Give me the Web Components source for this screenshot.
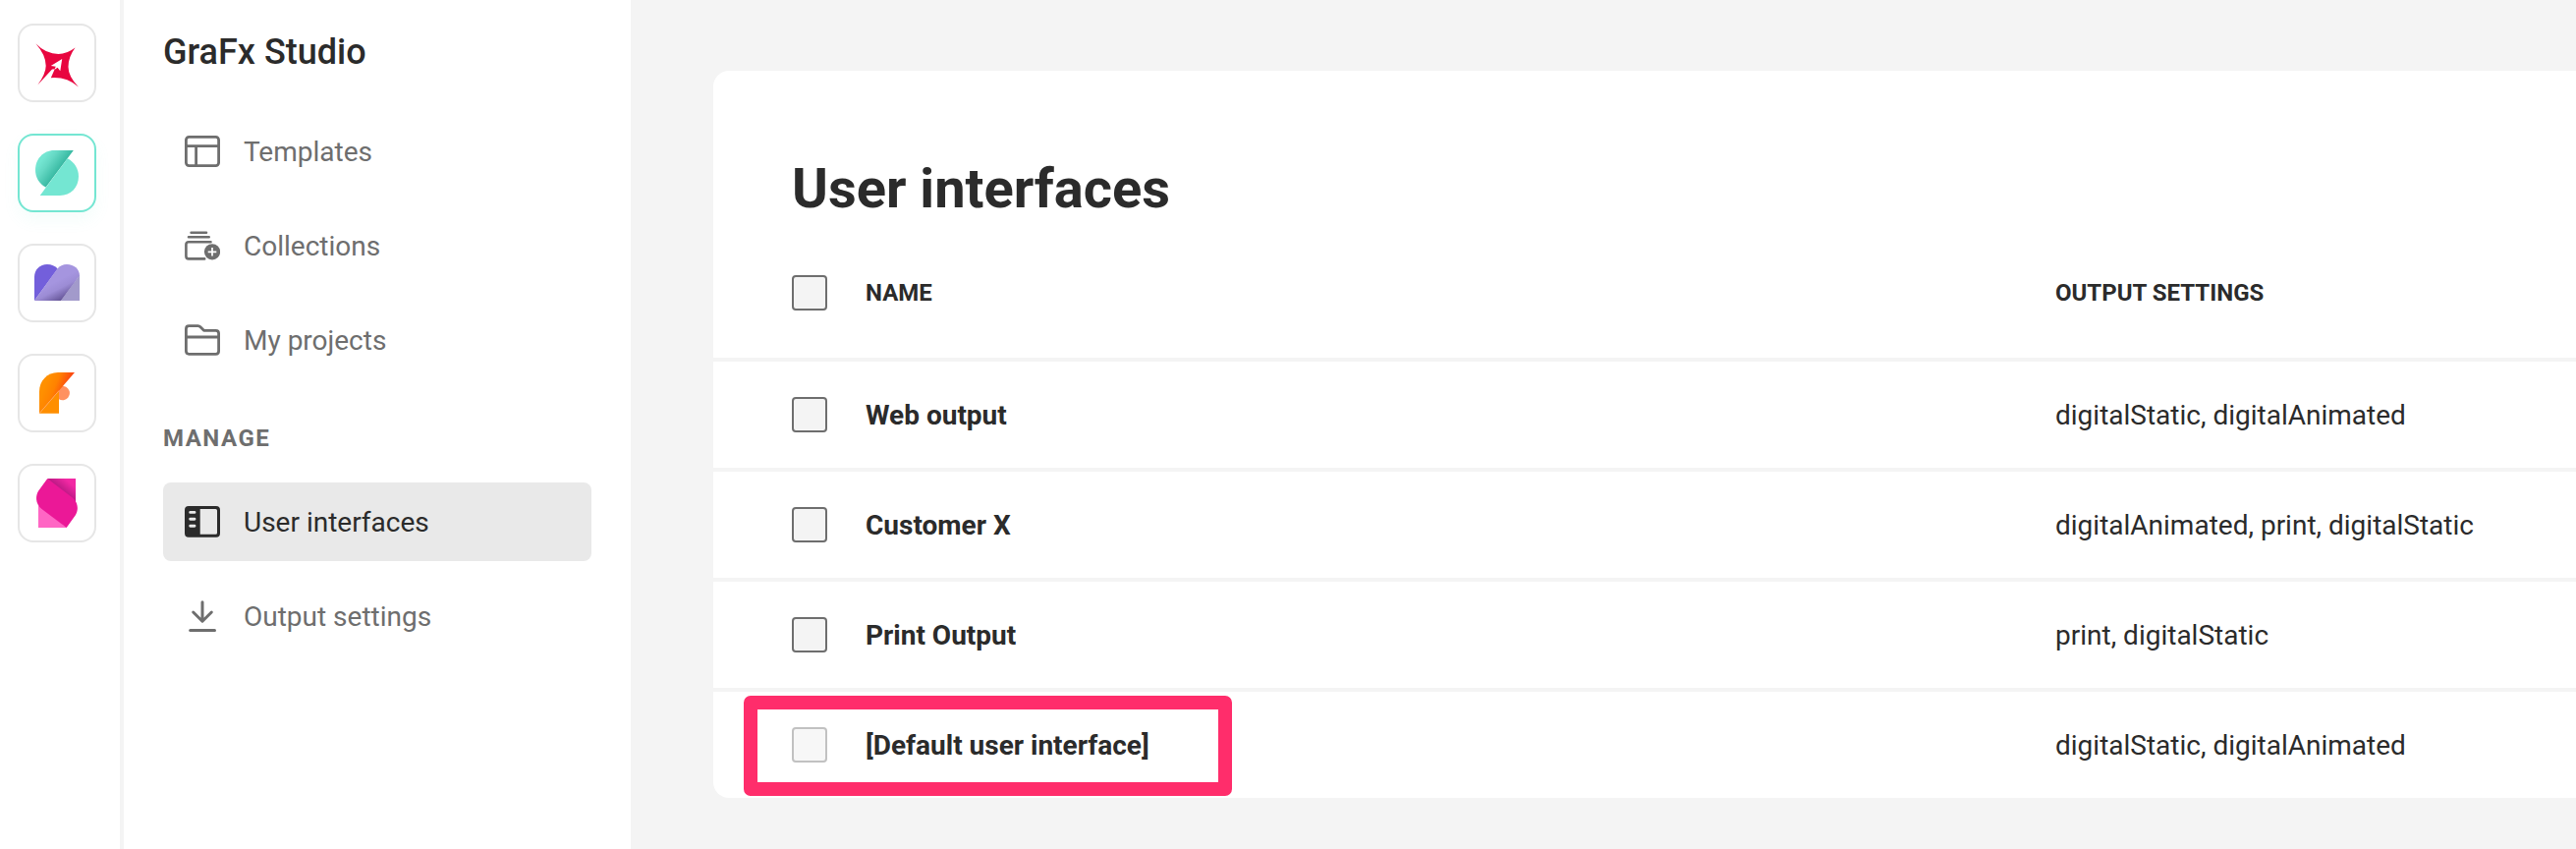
<!DOCTYPE html>
<html lang="en">
<head>
<meta charset="utf-8">
<title>GraFx Studio</title>
<style>
html,body{margin:0;height:100%;overflow:hidden}
body{font-family:Roboto,"Liberation Sans",sans-serif;color:#2b2b2b;background:#f4f4f4}
</style>
</head>
<body>
<gx-app></gx-app>
<script>
const define = (name, html) => customElements.define(name, class extends HTMLElement {
  constructor() {
    super();
    const t = document.createElement('template');
    t.innerHTML = typeof html === 'function' ? html(this) : html;
    this.attachShadow({mode: 'open'}).append(t.content.cloneNode(true));
  }
});

const LOGOS = {
  hub: `<path fill="#e8063f" d="M18.500 20.500Q29 31 41.500 31Q50 31 58.500 24.500Q51.500 34 51.500 44Q51.500 54 62 64.500Q50 54 33.800 55.200L37.300 47.200Q36.500 45.300 34.800 46.800L20.300 62.500Q28.700 51 28.700 43Q28.700 32 18.500 20.500Z"/><path fill="#fff" d="M45.200 36L33.800 43L38.800 43.800L37 47.300L40.600 44.800L43.300 48.200Z"/>`,
  studio: `<defs><linearGradient id="a" gradientUnits="userSpaceOnUse" x1="26" y1="25" x2="42" y2="37"><stop stop-color="#74e6d2"/><stop offset=".35" stop-color="#66d9c5"/><stop offset="1" stop-color="#38b9a2"/></linearGradient></defs><path fill="url(#a)" d="M56.800 17H37C26 17 18 26 18 37C18 44.800 22 51.300 28.700 54.500Z"/><path fill="#74e6d2" d="M22.700 63L50.700 25.200C58 29 62 36 62 43.500C62 54.500 54 63 43 63Z"/>`,
  media: `<defs><linearGradient id="a" gradientUnits="userSpaceOnUse" x1="36" y1="40" x2="45" y2="57.500"><stop stop-color="#a595df"/><stop offset=".4" stop-color="#9c8cd5"/><stop offset="1" stop-color="#635395"/></linearGradient></defs><path fill="#735fdb" d="M17 58V34C17 26.500 22.500 21 30 21C34.500 21 38 22.500 40.700 25.500Z"/><path fill="#a29acb" d="M63 32V58H44Z"/><path fill="url(#a)" d="M17 58L40.200 25.700C43 22.500 46 21 50 21C57.500 21 63 26 63 32.500L44 58Z"/>`,
  fonts: `<defs><linearGradient id="a" gradientUnits="userSpaceOnUse" x1="30" y1="27" x2="50" y2="35"><stop stop-color="#ff9000"/><stop offset=".45" stop-color="#ff8200"/><stop offset="1" stop-color="#fb4811"/></linearGradient></defs><path fill="#ff9160" d="M42 33.900A7.200 7.200 0 1 1 42 46.200Z"/><path fill="#ff8f00" d="M42 37.500V60.800H22Z"/><path fill="url(#a)" d="M58 19H41C30 19 22 27.500 22 38.500V60.800Z"/><path stroke="#ffad70" stroke-width=".6" d="M22 60.800L42 37.600"/>`,
  brand: `<defs><linearGradient id="a" gradientUnits="userSpaceOnUse" x1="43" y1="27" x2="53" y2="15"><stop stop-color="#b71882"/><stop offset=".8" stop-color="#f229a4"/></linearGradient></defs><path fill="url(#a)" d="M30.300 15H59V38.500L45 30Z"/><path fill="#ff66c4" d="M21 42V65H50Z"/><path fill="#eb1897" d="M30.300 15L55.500 34.200C61 38.500 62.500 46 59 52L49.700 65L24.500 46C19 42 17.200 34 21.200 27.500Z"/>`
};

const ICONS = {
  templates: `<g fill="none" stroke="currentColor" stroke-width="2.800"><rect x="1.400" y="3.400" width="33.200" height="29.200" rx="3"/><path d="M1 12.700H35M11.600 12.700V33"/></g>`,
  collections: `<g fill="none" stroke="currentColor" stroke-width="2.600" stroke-linecap="round"><path d="M6.600 4.700H22M4 9.300H24.700"/><path d="M26.500 14.200H4Q1.400 14.200 1.400 16.800V28.800Q1.400 31.400 4 31.400H20.200"/></g><circle cx="28" cy="24.300" r="8.100" fill="currentColor"/><path d="M28 20V28.600M23.700 24.300H32.300" stroke="#fff" stroke-width="1.700"/>`,
  projects: `<g fill="none" stroke="currentColor" stroke-width="2.800" stroke-linejoin="round"><path d="M4.400 3.700H13.500Q15 3.700 16 4.800L19.500 8.300H31.600Q34.600 8.300 34.600 11.300V29.300Q34.600 32.300 31.600 32.300H4.400Q1.400 32.300 1.400 29.300V6.700Q1.400 3.700 4.400 3.700Z"/><path d="M1.400 15H34.600"/></g>`,
  interfaces: `<path fill="currentColor" fill-rule="evenodd" d="M4 2H32Q36 2 36 6V29.700Q36 33.700 32 33.700H4Q0 33.700 0 29.700V6Q0 2 4 2ZM15.700 5V30.700H31.500Q33 30.700 33 29.200V6.500Q33 5 31.500 5Z"/><path d="M5.700 8.400H10M5.700 15.200H10M5.700 22.200H10" stroke="#e9e9e9" stroke-width="2.900" stroke-linecap="round"/>`,
  output: `<g fill="none" stroke="currentColor" stroke-width="3" stroke-linecap="round" stroke-linejoin="round"><path d="M18 3.700V22.500M8.700 14L18 23.200L27.300 14"/><path d="M5.700 32.500H30.500"/></g>`
};

define('gx-tile', el => `<style>
:host{display:block;box-sizing:border-box;width:80px;height:80px;border:2px solid #e6e6e6;border-radius:16px;background:#fff}
:host([active]){border-color:#74e6d2;box-shadow:0 8px 16px rgba(116,230,210,.08)}
svg{display:block;margin:-2px}
</style><svg width="80" height="80" viewBox="0 0 80 80">${LOGOS[el.getAttribute('logo')]}</svg>`);

define('gx-nav-item', el => `<style>
:host{display:flex;align-items:center;box-sizing:border-box;height:80px;padding:0 22px;gap:24px;border-radius:8px;color:#6e6e6e;font-size:28px;line-height:40px}
:host([active]){background:#e9e9e9;color:#2b2b2b}
svg{flex:none}
span{padding-top:1px}
</style><svg width="36" height="36" viewBox="0 0 36 36">${ICONS[el.getAttribute('icon')]}</svg><span><slot></slot></span>`);

define('gx-checkbox', `<style>
:host{display:block;box-sizing:border-box;width:36px;height:36px;border:2px solid #6e6e6e;border-radius:4px;background:#f4f4f4}
:host([disabled]){border-color:#c1c1c1;background:#f7f7f7}
</style>`);

define('gx-row', `<style>
:host{display:grid;grid-template-columns:75px 1211px 1fr;align-items:center;box-sizing:border-box;height:112px;padding-left:80px;border-top:4px solid #f4f4f4;font-size:28px;line-height:40px;position:relative}
:host([head]){height:132px;border:0;font-size:24px;font-weight:700}
span{padding-top:1px}
:host([head]) span{padding-top:0}
.name{font-weight:700}
</style><slot name="check"></slot><span class="name"><slot name="name"></slot></span><span><slot></slot></span><slot name="mark"></slot>`);

define('gx-highlight', `<style>
:host{position:absolute;box-sizing:border-box;left:31px;top:4px;width:497px;height:102px;border:14px solid #ff2d6b;border-radius:7px}
</style>`);

define('gx-rail', `<style>
:host{display:flex;flex-direction:column;gap:32px;box-sizing:border-box;width:126px;padding:24px 0 0 18px;border-right:4px solid #f4f4f4;background:#fff}
</style><slot></slot>`);

define('gx-sidebar', `<style>
:host{display:block;box-sizing:border-box;width:516px;padding:31px 40px 0;background:#fff}
h2{margin:0 0 39px;font-size:36px;font-weight:500;line-height:44px}
h3{margin:40px 0 25px;font-size:24px;font-weight:700;line-height:40px;letter-spacing:1.5px;color:#6e6e6e}
nav{display:flex;flex-direction:column;gap:16px}
</style>
<h2>GraFx Studio</h2>
<nav><gx-nav-item icon="templates">Templates</gx-nav-item><gx-nav-item icon="collections">Collections</gx-nav-item><gx-nav-item icon="projects">My projects</gx-nav-item></nav>
<h3>MANAGE</h3>
<nav><gx-nav-item icon="interfaces" active>User interfaces</gx-nav-item><gx-nav-item icon="output">Output settings</gx-nav-item></nav>`);

define('gx-panel', `<style>
:host{display:block;box-sizing:border-box;height:740px;background:#fff;border-radius:16px 0 0 16px}
h1{margin:0;padding:88px 80px 8px;font-size:56px;font-weight:700;line-height:64px}
</style><h1><slot name="title"></slot></h1><slot></slot>`);

define('gx-app', `<style>
:host{display:flex;height:100vh}
gx-rail,gx-sidebar{flex:none}
main{flex:1;padding:72px 0 0 84px;min-width:0}
</style>
<gx-rail><gx-tile logo="hub"></gx-tile><gx-tile logo="studio" active></gx-tile><gx-tile logo="media"></gx-tile><gx-tile logo="fonts"></gx-tile><gx-tile logo="brand"></gx-tile></gx-rail>
<gx-sidebar></gx-sidebar>
<main><gx-panel><span slot="title">User interfaces</span>
<gx-row head><gx-checkbox slot="check"></gx-checkbox><span slot="name">NAME</span>OUTPUT SETTINGS</gx-row>
<gx-row><gx-checkbox slot="check"></gx-checkbox><span slot="name">Web output</span>digitalStatic, digitalAnimated</gx-row>
<gx-row><gx-checkbox slot="check"></gx-checkbox><span slot="name">Customer X</span>digitalAnimated, print, digitalStatic</gx-row>
<gx-row><gx-checkbox slot="check"></gx-checkbox><span slot="name">Print Output</span>print, digitalStatic</gx-row>
<gx-row><gx-checkbox slot="check" disabled></gx-checkbox><span slot="name">[Default user interface]</span>digitalStatic, digitalAnimated<gx-highlight slot="mark"></gx-highlight></gx-row>
</gx-panel></main>`);
</script>
</body>
</html>
